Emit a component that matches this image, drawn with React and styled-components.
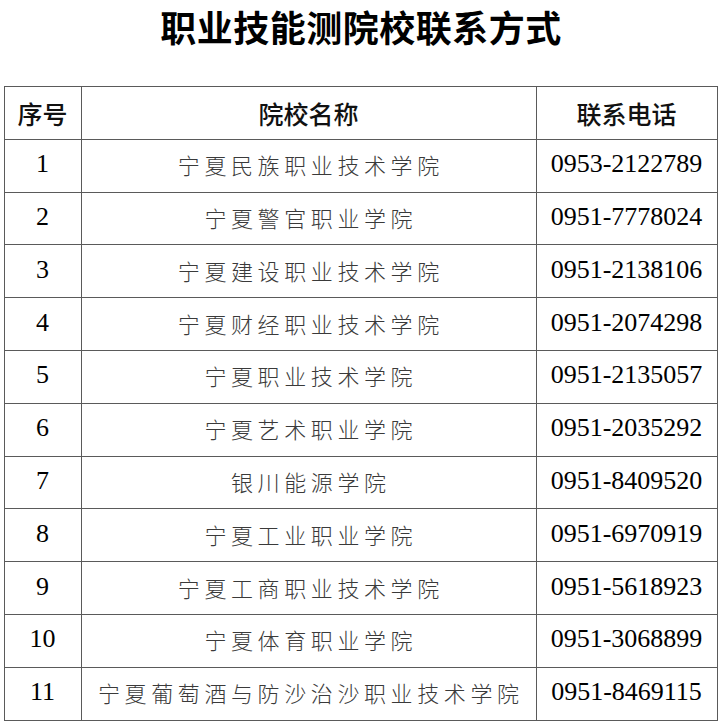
import React from 'react'
import styled, { createGlobalStyle } from 'styled-components'

const GlobalStyle = createGlobalStyle`
  html, body {
    margin: 0;
    padding: 0;
    background: #fff;
  }
`

const schools = [
  ['宁夏民族职业技术学院', '0953-2122789'],
  ['宁夏警官职业学院', '0951-7778024'],
  ['宁夏建设职业技术学院', '0951-2138106'],
  ['宁夏财经职业技术学院', '0951-2074298'],
  ['宁夏职业技术学院', '0951-2135057'],
  ['宁夏艺术职业学院', '0951-2035292'],
  ['银川能源学院', '0951-8409520'],
  ['宁夏工业职业学院', '0951-6970919'],
  ['宁夏工商职业技术学院', '0951-5618923'],
  ['宁夏体育职业学院', '0951-3068899'],
  ['宁夏葡萄酒与防沙治沙职业技术学院', '0951-8469115']
]

const Page = styled.div`
  width: 722px;
  height: 724px;
  overflow: hidden;
  display: flex;
  flex-direction: column;
  align-items: center;
`

const Title = styled.h1`
  margin: 0 0 34px;
  height: 52px;
  line-height: 52px;
  font-family: "Noto Sans CJK SC", sans-serif;
  font-size: 36px;
  font-weight: 700;
  color: #000;
  letter-spacing: 0.5px;
`

const Table = styled.table`
  width: 710px;
  margin-left: -1px;
  border-collapse: collapse;
  table-layout: fixed;
  border: 1px solid #5a5a5a;
`

const Row = styled.tr`
  height: 52.8px;
`

const HeadCell = styled.th`
  border: 1px solid #5a5a5a;
  padding: 0;
  text-align: center;
  font-family: "Noto Sans CJK SC", sans-serif;
  font-size: 25px;
  font-weight: 500;
  color: #111;
  width: ${p => p.$w}px;
`

const Cell = styled.td`
  border: 1px solid #5a5a5a;
  border-top-color: #8a8a8a;
  padding: 0 0 3px;
  text-align: center;
  white-space: nowrap;
  font-family: ${p => p.$num ? '"Liberation Serif", serif' : '"Noto Sans CJK SC", sans-serif'};
  font-size: ${p => p.$num ? '26px' : '22px'};
  font-weight: ${p => p.$num ? 400 : 300};
  letter-spacing: ${p => p.$num ? '0' : '4.6px'};
  color: ${p => p.$num ? '#000' : '#3a3a3a'};
  text-indent: ${p => p.$num ? '0' : '4.6px'};
`

export default function App () {
  return (
    <Page>
      <GlobalStyle />
      <Title>职业技能测院校联系方式</Title>
      <Table>
        <thead>
          <Row>
            <HeadCell $w={76}>序号</HeadCell>
            <HeadCell $w={454}>院校名称</HeadCell>
            <HeadCell $w={180}>联系电话</HeadCell>
          </Row>
        </thead>
        <tbody>
          {schools.map(([name, phone], i) => (
            <Row key={name}>
              <Cell $num>{i + 1}</Cell>
              <Cell>{name}</Cell>
              <Cell $num>{phone}</Cell>
            </Row>
          ))}
        </tbody>
      </Table>
    </Page>
  )
}
